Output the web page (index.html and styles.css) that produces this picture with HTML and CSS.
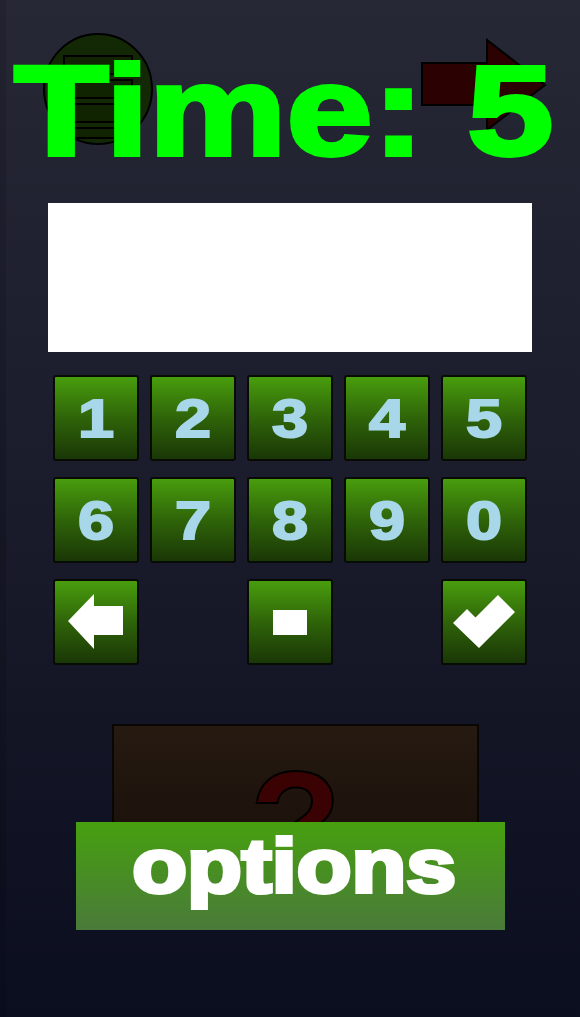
FILE: index.html
```html
<!DOCTYPE html>
<html lang="en">
<head>
    <meta charset="UTF-8">
    <meta name="viewport" content="width=device-width, initial-scale=1.0">
    <title>Time Keypad</title>
    <link rel="stylesheet" href="styles.css">
</head>
<body>
    <div class="screen">
        <div class="header">
            <svg class="menu-icon" width="112" height="114" viewBox="0 0 112 114">
                <ellipse cx="56" cy="57" rx="54" ry="55" fill="#132804" stroke="#000" stroke-width="2"/>
                <rect x="22" y="24" width="68" height="18" fill="#112402" stroke="#000" stroke-width="2"/>
                <rect x="22" y="48" width="68" height="18" fill="#112402" stroke="#000" stroke-width="2"/>
                <rect x="22" y="72" width="68" height="18" fill="#112402" stroke="#000" stroke-width="2"/>
                <rect x="22" y="96" width="68" height="10" fill="#112402" stroke="#000" stroke-width="2"/>
            </svg>
            <svg class="next-icon" width="130" height="95" viewBox="0 0 130 95">
                <polygon points="2,25 67,25 67,2 125,47 67,92 67,67 2,67" fill="#2b0101" stroke="#000" stroke-width="2"/>
            </svg>
            <h1 class="title">Time: 5</h1>
        </div>

        <div class="display"></div>

        <div class="keypad">
            <button class="key"><span>1</span></button>
            <button class="key"><span>2</span></button>
            <button class="key"><span>3</span></button>
            <button class="key"><span>4</span></button>
            <button class="key"><span>5</span></button>
            <button class="key"><span>6</span></button>
            <button class="key"><span>7</span></button>
            <button class="key"><span>8</span></button>
            <button class="key"><span>9</span></button>
            <button class="key"><span>0</span></button>
            <button class="key key-back">
                <svg width="56" height="56" viewBox="0 0 56 56">
                    <polygon points="0,27 26,0 26,12 55,12 55,41 26,41 26,55" fill="#fff"/>
                </svg>
            </button>
            <button class="key key-minus">
                <div class="minus"></div>
            </button>
            <button class="key key-ok">
                <svg width="62" height="54" viewBox="0 0 62 54">
                    <polygon points="0,28 14,14 22.5,22.5 45,0 62,17 26,53" fill="#fff"/>
                </svg>
            </button>
        </div>

        <div class="help-box">
            <span class="help-mark">?</span>
        </div>
        <button class="options"><span>options</span></button>
    </div>
</body>
</html>
```

FILE: styles.css
```css
body {
    margin: 0;
    font-family: "Liberation Sans", Arial, sans-serif;
    background: #0b0e1f;
}
.screen {
    width: 580px;
    height: 1017px;
    overflow: hidden;
    background: linear-gradient(to bottom, #272835 0%, #1b1c2c 45%, #0b0e1f 100%);
    box-shadow: inset 6px 0 0 rgba(0, 0, 0, 0.12);
}
.header {
    position: relative;
    height: 203px;
    padding-top: 47px;
    box-sizing: border-box;
}
.menu-icon {
    position: absolute;
    left: 42px;
    top: 32px;
}
.next-icon {
    position: absolute;
    left: 420px;
    top: 38px;
}
.title {
    position: relative;
    margin: 0 0 0 14px;
    font-size: 128px;
    line-height: 1;
    font-weight: bold;
    color: #00ff00;
    -webkit-text-stroke: 4px #00ff00;
    white-space: nowrap;
    transform: scaleX(1.21);
    transform-origin: left;
}
.display {
    margin: 0 48px;
    height: 149px;
    background-color: #fff;
}
.keypad {
    display: grid;
    grid-template-columns: repeat(5, 86px);
    grid-auto-rows: 86px;
    gap: 16px 11px;
    margin: 23px 0 0 53px;
}
.key {
    display: flex;
    justify-content: center;
    align-items: center;
    padding: 0;
    background: linear-gradient(to bottom, #489d0d 0%, #2f6409 50%, #1a3706 100%);
    border: 2px solid #070b04;
    border-radius: 3px;
    font-family: inherit;
    font-size: 54px;
    line-height: 1;
    font-weight: bold;
    color: #a8d7e9;
    -webkit-text-stroke: 2px #a8d7e9;
}
.key span {
    display: inline-block;
    transform: scaleX(1.2);
}
.key-minus {
    grid-column: 3;
}
.key-ok {
    grid-column: 5;
}
.minus {
    width: 34px;
    height: 25px;
    background-color: #fff;
}
.help-box {
    width: 367px;
    height: 115px;
    margin: 59px 0 0 112px;
    box-sizing: border-box;
    overflow: hidden;
    padding-top: 23px;
    text-align: center;
    background: linear-gradient(to bottom, #261a11, #1b110b);
    border: 2px solid #0a0604;
}
.help-mark {
    font-size: 150px;
    line-height: 1;
    font-weight: bold;
    color: #3a0202;
    -webkit-text-stroke: 2px #000;
}
.options {
    position: relative;
    display: block;
    width: 429px;
    height: 108px;
    margin: -17px 0 0 76px;
    padding: 0 0 20px;
    border: none;
    background: linear-gradient(to bottom, #46a00f, #4a7a3a);
    font-family: inherit;
    font-size: 76px;
    line-height: 88px;
    font-weight: bold;
    color: #fff;
    -webkit-text-stroke: 4px #fff;
    text-align: center;
}
.options span {
    display: inline-block;
    margin-left: 8px;
    transform: scaleX(1.18);
}
```
